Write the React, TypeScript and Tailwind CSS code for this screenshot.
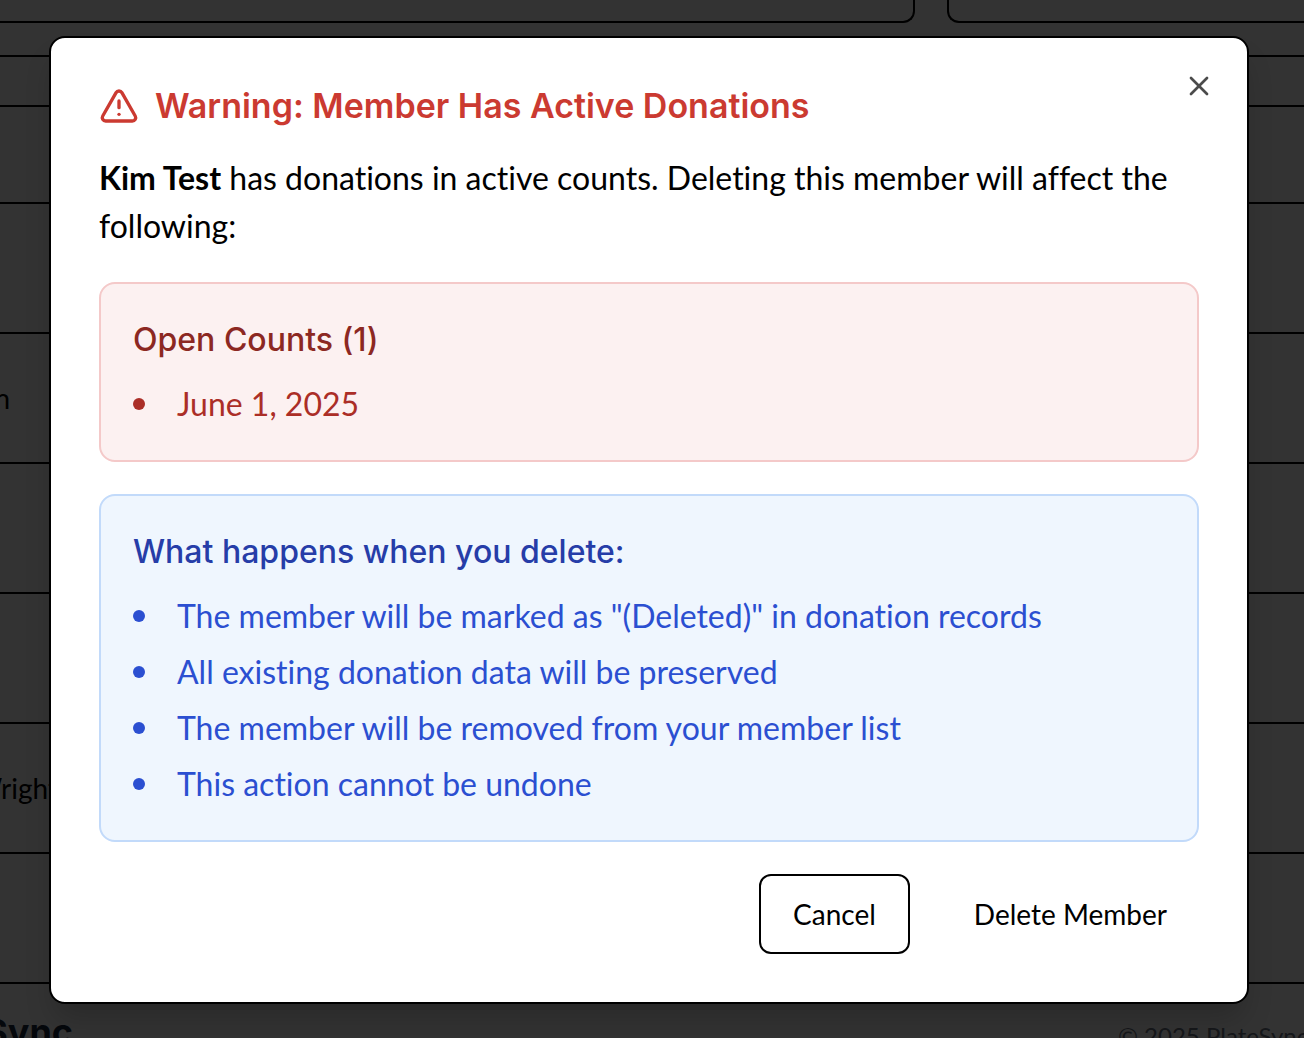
import { TriangleAlert, X } from "lucide-react";

const effects = [
  'The member will be marked as "(Deleted)" in donation records',
  "All existing donation data will be preserved",
  "The member will be removed from your member list",
  "This action cannot be undone",
];

function Bullets({ items }: { items: string[] }) {
  return (
    <ul className="mt-4 flex flex-col gap-2 text-[32px] leading-[48px]">
      {items.map((item) => (
        <li key={item} className="flex items-center gap-8">
          <span className="size-3 shrink-0 rounded-full bg-current" />
          <span>{item}</span>
        </li>
      ))}
    </ul>
  );
}

function MembersPage() {
  return (
    <div aria-hidden="true" className="min-h-screen overflow-hidden bg-white text-[28px] text-black">
      <div className="flex h-[23px] gap-8">
        <div className="w-[915px] shrink-0 rounded-br-xl border-r-2 border-b-2 border-black" />
        <div className="flex-1 rounded-bl-xl border-b-2 border-l-2 border-black" />
      </div>
      <div className="mt-8 border-y-2 border-black">
        <div className="h-12" />
      </div>
      <div className="h-[97px] border-b-2 border-black" />
      <div className="h-[130px] border-b-2 border-black" />
      <div className="flex h-[130px] items-center border-b-2 border-black">
        <div className="flex w-[10px] justify-end">n</div>
      </div>
      <div className="h-[130px] border-b-2 border-black" />
      <div className="h-[130px] border-b-2 border-black" />
      <div className="flex h-[130px] items-center border-b-2 border-black">
        <div className="flex w-[58px] justify-end">Wright</div>
      </div>
      <div className="h-[130px] border-b-2 border-black" />
      <div className="flex h-[54px] items-start justify-between overflow-hidden pt-7">
        <div className="flex w-[73px] justify-end font-['Inter',sans-serif] text-[36px] leading-[40px] font-bold text-slate-800">
          PlateSync
        </div>
        <div className="w-[186px] pt-2 text-[24px] leading-[32px] whitespace-nowrap text-gray-500">
          © 2025 PlateSync
        </div>
      </div>
    </div>
  );
}

export default function App() {
  return (
    <div className="relative h-screen overflow-hidden font-['Lato',sans-serif] [font-variant-ligatures:none]">
      <MembersPage />
      <div className="absolute inset-0 flex items-start bg-black/80 pt-9 pr-[55px] pl-[49px]">
        <div
          role="alertdialog"
          aria-modal="true"
          aria-labelledby="dialog-title"
          aria-describedby="dialog-description"
          className="relative w-full max-w-[1200px] rounded-2xl border-2 border-black bg-white p-12 text-black shadow-[0_20px_30px_-6px_rgba(0,0,0,0.2)]"
        >
          <h2
            id="dialog-title"
            className="flex items-center gap-4 font-['Inter',sans-serif] text-[34px] leading-[40px] font-semibold text-[#cb3a31]"
          >
            <TriangleAlert className="size-10" strokeWidth={2} />
            Warning: Member Has Active Donations
          </h2>
          <p id="dialog-description" className="mt-7 text-[32px] leading-[48px]">
            <strong className="font-bold">Kim Test</strong> has donations in active counts. Deleting this member
            will affect the following:
          </p>

          <section className="mt-8 rounded-2xl border-2 border-[#f4c9c9] bg-[#fcf1f1] p-8 text-[#ab2e27]">
            <h3 className="font-['Inter',sans-serif] text-[32px] leading-[48px] font-medium text-[#8c2822]">
              Open Counts (1)
            </h3>
            <Bullets items={["June 1, 2025"]} />
          </section>

          <section className="mt-8 rounded-2xl border-2 border-[#c2dafa] bg-[#eff6fe] p-8 text-[#2b4fd1]">
            <h3 className="font-['Inter',sans-serif] text-[32px] leading-[48px] font-medium text-[#263da8]">
              What happens when you delete:
            </h3>
            <Bullets items={effects} />
          </section>

          <div className="mt-8 flex justify-end gap-8 text-[28px] leading-[40px]">
            <button type="button" className="h-20 rounded-xl border-2 border-black px-8">
              Cancel
            </button>
            <button type="button" className="h-20 rounded-xl px-8">
              Delete Member
            </button>
          </div>

          <button type="button" aria-label="Close" className="absolute top-8 right-8 text-[#4b4b4b]">
            <X className="size-8" strokeWidth={2} />
          </button>
        </div>
      </div>
    </div>
  );
}
